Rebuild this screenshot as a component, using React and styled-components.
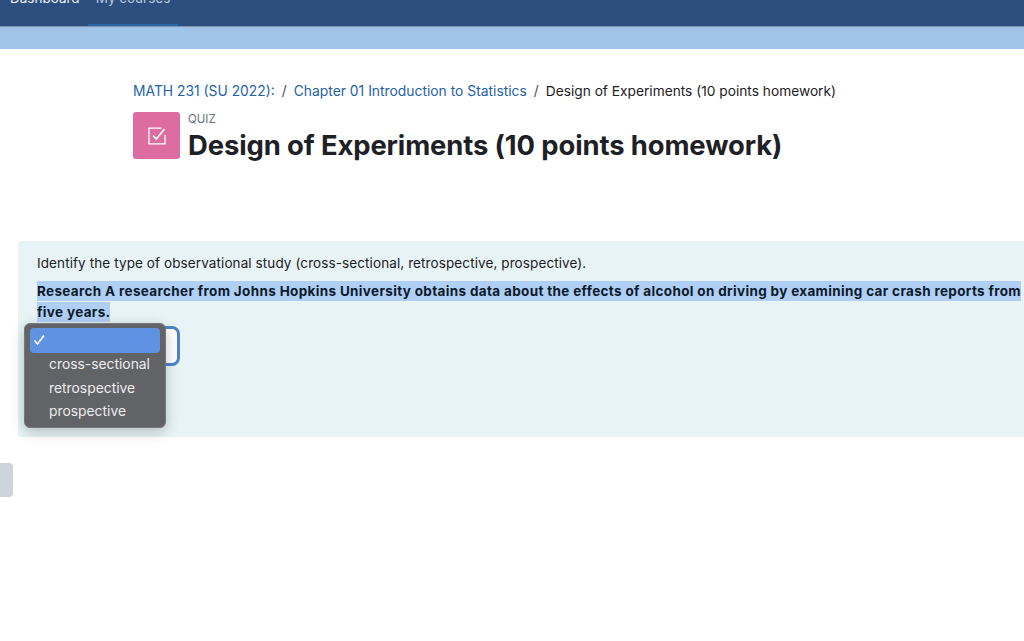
import React from 'react'
import styled, { createGlobalStyle } from 'styled-components'

const GlobalStyle = createGlobalStyle`
  html, body {
    margin: 0;
    padding: 0;
    background: #fff;
    overflow: hidden;
    font-family: Inter, "Liberation Sans", sans-serif;
  }
`

const Page = styled.div`
  width: 1024px;
  height: 641px;
  overflow: hidden;
  position: relative;
`

const NavBar = styled.nav`
  height: 27px;
  box-sizing: border-box;
  background: #2c4f7f;
  border-bottom: 1px solid #7d93b2;
  display: flex;
  align-items: flex-end;
  padding-left: 2px;
  overflow: hidden;
`

const NavItem = styled.div`
  flex: none;
  height: 36px;
  box-sizing: border-box;
  padding: 0 8px;
  font-size: 13.5px;
  line-height: 17px;
  color: ${(p) => (p.$active ? '#b9c6d8' : '#ecf0f5')};
  border-bottom: 2px solid ${(p) => (p.$active ? '#2b66a6' : 'transparent')};
`

const Band = styled.div`
  height: 22px;
  background: #a0c4e8;
`

const Header = styled.header`
  padding: 33px 0 0 133px;
`

const Crumbs = styled.div`
  display: flex;
  align-items: center;
  font-size: 13.85px;
  line-height: 18px;
  color: #1d2125;
  white-space: nowrap;
`

const CrumbLink = styled.a`
  color: #1f62a8;
`

const CrumbCurrent = styled.span`
  font-size: 13.72px;
`

const Sep = styled.span`
  margin: 0 7px;
  color: #4a4f55;
`

const Heading = styled.div`
  display: flex;
  gap: 8px;
  margin-top: 12px;
`

const ActivityIcon = styled.div`
  width: 47px;
  height: 47px;
  border-radius: 3px;
  background: #dd6ca0;
  display: flex;
  align-items: center;
  justify-content: center;
`

const TitleBlock = styled.div`
  display: flex;
  flex-direction: column;
`

const Kicker = styled.div`
  font-size: 11.5px;
  line-height: 14px;
  color: #6a737b;
`

const Title = styled.h1`
  margin: 3px 0 0;
  font-size: 27.4px;
  line-height: 32px;
  font-weight: 700;
  letter-spacing: -0.1px;
  color: #1d2125;
  white-space: nowrap;
`

const QuestionCard = styled.section`
  position: relative;
  box-sizing: border-box;
  width: 1040px;
  height: 196px;
  margin: 80px 0 0 18px;
  padding: 13px 19px;
  background: #e7f3f5;
  border-radius: 4px;
  color: #1d2125;
`

const Prompt = styled.p`
  margin: 0;
  font-size: 13.5px;
  line-height: 18px;
  letter-spacing: 0.1px;
  white-space: nowrap;
`

const Statement = styled.p`
  margin: 9px 0 0;
  width: 990px;
  font-size: 13.5px;
  line-height: 21px;
  font-weight: 700;
  letter-spacing: 0.34px;
  color: #0c1a2a;
`

const Marked = styled.span`
  background: #b0cff5;
  padding: 2px 0;
  box-decoration-break: clone;
`

const SelectBox = styled.div`
  width: 147px;
  height: 40px;
  margin: 3px 0 0 -4px;
  box-sizing: border-box;
  border: 3px solid #4c86c6;
  border-radius: 8px;
  background: #fff;
`

const Menu = styled.ul`
  position: absolute;
  left: 6px;
  top: 82px;
  width: 142px;
  height: 105px;
  box-sizing: border-box;
  margin: 0;
  padding: 4px 5px 0;
  list-style: none;
  background: #626367;
  border: 1px solid #77787b;
  border-radius: 6px;
  box-shadow: 0 4px 14px rgba(0, 0, 0, 0.22);
  font-size: 13.85px;
  color: #ececee;
`

const MenuItem = styled.li`
  position: relative;
  height: ${(p) => (p.$selected ? '25px' : '23.7px')};
  line-height: 23.7px;
  padding-left: 19px;
  border-radius: 4px;
  background: ${(p) => (p.$selected ? '#5f92e2' : 'transparent')};
  white-space: nowrap;
`

const Check = styled.svg`
  position: absolute;
  left: 3px;
  top: 6px;
`

const SideTab = styled.div`
  position: absolute;
  left: 0;
  top: 463px;
  width: 13px;
  height: 34px;
  background: #ced4da;
  border-radius: 0 4px 4px 0;
`

const App = () => {
  const options = ['cross-sectional', 'retrospective', 'prospective']

  return (
    <Page>
      <GlobalStyle />
      <NavBar>
        <NavItem>Dashboard</NavItem>
        <NavItem $active>My courses</NavItem>
      </NavBar>
      <Band />
      <Header>
        <Crumbs>
          <CrumbLink>MATH 231 (SU 2022):</CrumbLink>
          <Sep>/</Sep>
          <CrumbLink>Chapter 01 Introduction to Statistics</CrumbLink>
          <Sep>/</Sep>
          <CrumbCurrent>Design of Experiments (10 points homework)</CrumbCurrent>
        </Crumbs>
        <Heading>
          <ActivityIcon>
            <svg width="18" height="18" viewBox="0 0 18 18" fill="none" stroke="#fff" strokeWidth="1.3">
              <path d="M13.5 1.2H1v15.6h16V8" />
              <path d="M5 8.5l3.3 3.5L16.5 2" strokeWidth="1.6" />
            </svg>
          </ActivityIcon>
          <TitleBlock>
            <Kicker>QUIZ</Kicker>
            <Title>Design of Experiments (10 points homework)</Title>
          </TitleBlock>
        </Heading>
      </Header>
      <QuestionCard>
        <Prompt>Identify the type of observational study (cross-sectional, retrospective, prospective).</Prompt>
        <Statement>
          <Marked>Research A researcher from Johns Hopkins University obtains data about the effects of alcohol on driving by examining car crash reports from five years.</Marked>
        </Statement>
        <SelectBox />
        <Menu>
          <MenuItem $selected>
            <Check width="13" height="12" viewBox="0 0 13 12" fill="none" stroke="#fff" strokeWidth="1.7">
              <path d="M1.5 6.5l3 3.5 6.5-8.5" />
            </Check>
          </MenuItem>
          {options.map((o) => (
            <MenuItem key={o}>{o}</MenuItem>
          ))}
        </Menu>
      </QuestionCard>
      <SideTab />
    </Page>
  )
}

export default App
